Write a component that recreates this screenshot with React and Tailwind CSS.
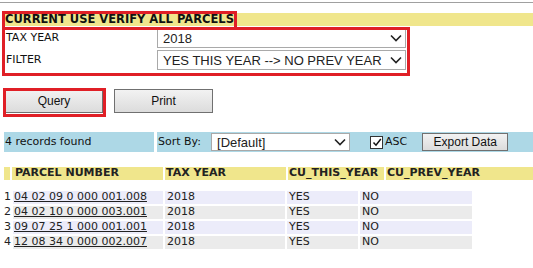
import React from "react";

const Chevron = () => (
  <svg width="12" height="8" viewBox="0 0 12 8" className="shrink-0">
    <polyline points="1,1.5 6,6.5 11,1.5" fill="none" stroke="#222" strokeWidth="1.6" />
  </svg>
);

const Select = ({ value, className = "" }) => (
  <div
    className={`flex items-center justify-between bg-white border border-[#a9a9a9] pl-[5px] pr-[3px] font-['Liberation_Sans',Arial,sans-serif] text-[13px] text-[#222] ${className}`}
  >
    <span className="leading-none">{value}</span>
    <Chevron />
  </div>
);

const Btn = ({ children, className = "" }) => (
  <div
    className={`flex items-center justify-center border border-[#707070] bg-gradient-to-b from-[#f2f2f2] to-[#dcdcdc] font-['Liberation_Sans',Arial,sans-serif] text-[12px] text-[#111] ${className}`}
  >
    {children}
  </div>
);

const rows = [
  ["1", "04 02 09 0 000 001.008"],
  ["2", "04 02 10 0 000 003.001"],
  ["3", "09 07 25 1 000 001.001"],
  ["4", "12 08 34 0 000 002.007"],
];

export default function App() {
  return (
    <div className="relative w-[533px] h-[268px] bg-white overflow-hidden font-['DejaVu_Sans',Verdana,sans-serif] text-[#111]">
      <div className="mt-[2px] h-px bg-[#a0a0a0]" />
      {/* title bar */}
      <div className="mt-[10px] ml-[4px] h-[13px] bg-[#f0e68c] flex items-center pl-[1px]">
        <span className="font-bold text-[11.5px] leading-none">CURRENT USE VERIFY ALL PARCELS</span>
      </div>
      {/* form rows */}
      <div className="mt-[2px] flex flex-col gap-[2px]">
        <div className="flex items-center h-[20px]">
          <div className="w-[157px] pl-[6px] text-[11px]">TAX YEAR</div>
          <Select value="2018" className="w-[249px] h-[20px]" />
        </div>
        <div className="flex items-center h-[20px]">
          <div className="w-[157px] pl-[6px] text-[11px]">FILTER</div>
          <Select value="YES THIS YEAR --> NO PREV YEAR" className="w-[249px] h-[20px]" />
        </div>
      </div>
      {/* buttons */}
      <div className="mt-[19px] flex gap-[11px] pl-[5px]">
        <Btn className="w-[98px] h-[24px]">Query</Btn>
        <Btn className="w-[99px] h-[24px]">Print</Btn>
      </div>
      {/* blue bar */}
      <div className="mt-[19px] ml-[4px] flex gap-[3px] h-[20px]">
        <div className="w-[150px] bg-[#add8e6] flex items-center pl-[1px] text-[11px]">4 records found</div>
        <div className="flex-1 bg-[#add8e6] flex items-center pl-[1px] text-[11px]">
          <span>Sort By:</span>
          <Select value="[Default]" className="ml-[10px] w-[139px] h-[18px]" />
          <div className="ml-[20px] w-[13px] h-[13px] bg-white border border-[#333] flex items-center justify-center">
            <svg width="10" height="9" viewBox="0 0 10 9">
              <polyline points="1.5,4.5 4,7.2 8.8,1" fill="none" stroke="#111" strokeWidth="1.5" />
            </svg>
          </div>
          <span className="ml-[2px]">ASC</span>
          <Btn className="ml-[15px] w-[86px] h-[18px]">Export Data</Btn>
        </div>
      </div>
      {/* table header */}
      <div className="mt-[15px] ml-[4px] flex gap-[2px] h-[13px] font-bold text-[11px] text-[#222]">
        <div className="w-[6px] bg-[#f0e68c]" />
        <div className="w-[151px] bg-[#f0e68c] pl-[3px] flex items-center">PARCEL NUMBER</div>
        <div className="w-[121px] bg-[#f0e68c] pl-[1px] flex items-center">TAX YEAR</div>
        <div className="w-[96px] bg-[#f0e68c] pl-[1px] flex items-center">CU_THIS_YEAR</div>
        <div className="flex-1 bg-[#f0e68c] pl-[1px] flex items-center">CU_PREV_YEAR</div>
      </div>
      {/* data rows */}
      <div className="mt-[11px] ml-[4px] flex flex-col gap-[2px] text-[11px] text-[#222]">
        {rows.map(([i, p], idx) => {
          const bg = idx % 2 === 0 ? "bg-[#ececfa]" : "bg-[#ebebeb]";
          return (
            <div key={i} className="flex gap-[2px] h-[13px] items-stretch">
              <div className="w-[7px] flex items-center">{i}</div>
              <div className={`w-[150px] ${bg} pl-[1px] flex items-center`}>
                <span className="underline">{p}</span>
              </div>
              <div className={`w-[120px] ${bg} pl-[2px] flex items-center`}>2018</div>
              <div className={`w-[71px] ${bg} pl-[2px] flex items-center`}>YES</div>
              <div className={`w-[112px] ${bg} pl-[2px] flex items-center`}>NO</div>
            </div>
          );
        })}
      </div>
      {/* red annotation boxes */}
      <div className="absolute left-[2px] top-[11px] w-[235px] h-[19px] border-[3px] border-[#e01f26]" />
      <div className="absolute left-[2px] top-[27px] w-[408px] h-[49px] border-[3px] border-[#e01f26]" />
      <div className="absolute left-[3px] top-[88px] w-[103px] h-[29px] border-[3px] border-[#e01f26]" />
    </div>
  );
}
